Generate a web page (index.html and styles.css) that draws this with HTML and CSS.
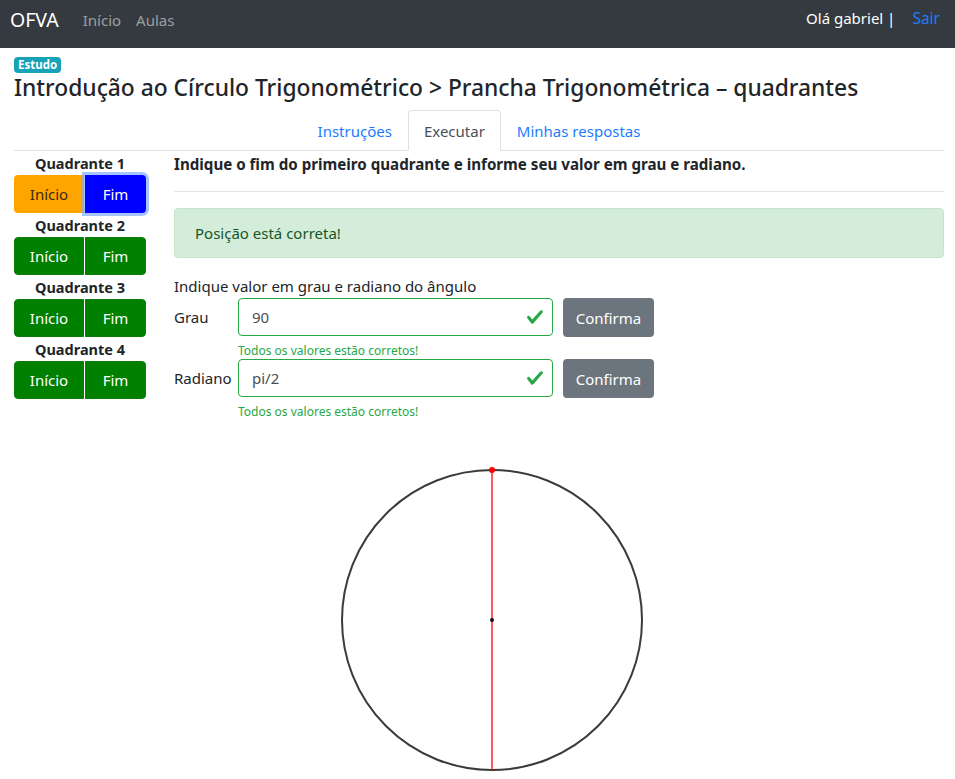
FILE: index.html
```html
<!DOCTYPE html>
<html lang="pt">
<head>
<meta charset="utf-8">
<title>OFVA</title>
<link rel="stylesheet" href="styles.css">
</head>
<body>
<nav class="navbar">
  <div class="nav-left">
    <span class="brand">OFVA</span>
    <a class="nav-link">Início</a>
    <a class="nav-link">Aulas</a>
  </div>
  <div class="nav-right">
    <span class="user">Olá gabriel |</span>
    <a class="logout">Sair</a>
  </div>
</nav>
<main class="container">
  <span class="badge">Estudo</span>
  <h4 class="title">Introdução ao Círculo Trigonométrico &gt; Prancha Trigonométrica – quadrantes</h4>
  <ul class="tabs">
    <li class="tab">Instruções</li>
    <li class="tab active">Executar</li>
    <li class="tab">Minhas respostas</li>
  </ul>
  <div class="workspace">
    <aside class="quadrants">
      <div class="quad">
        <div class="quad-title">Quadrante 1</div>
        <div class="btn-group"><button class="btn btn-orange">Início</button><button class="btn btn-blue">Fim</button></div>
      </div>
      <div class="quad">
        <div class="quad-title">Quadrante 2</div>
        <div class="btn-group"><button class="btn btn-green">Início</button><button class="btn btn-green">Fim</button></div>
      </div>
      <div class="quad">
        <div class="quad-title">Quadrante 3</div>
        <div class="btn-group"><button class="btn btn-green">Início</button><button class="btn btn-green">Fim</button></div>
      </div>
      <div class="quad">
        <div class="quad-title">Quadrante 4</div>
        <div class="btn-group"><button class="btn btn-green">Início</button><button class="btn btn-green">Fim</button></div>
      </div>
    </aside>
    <section class="content">
      <p class="question">Indique o fim do primeiro quadrante e informe seu valor em grau e radiano.</p>
      <hr class="divider">
      <div class="alert">Posição está correta!</div>
      <p class="prompt">Indique valor em grau e radiano do ângulo</p>
      <div class="field-row">
        <label class="field-label">Grau</label>
        <div class="field">
          <div class="input-valid"><span>90</span>
            <svg class="check" viewBox="0 0 8 8" width="18" height="18"><path fill="#28a745" d="M2.3 6.73L.6 4.53c-.4-1.04.46-1.4 1.1-.8l1.1 1.4 3.4-3.8c.6-.63 1.6-.27 1.2.7l-4 4.6c-.43.5-.8.4-1.1.1z"/></svg>
          </div>
          <div class="valid-msg">Todos os valores estão corretos!</div>
        </div>
        <button class="btn btn-secondary">Confirma</button>
      </div>
      <div class="field-row">
        <label class="field-label">Radiano</label>
        <div class="field">
          <div class="input-valid"><span>pi/2</span>
            <svg class="check" viewBox="0 0 8 8" width="18" height="18"><path fill="#28a745" d="M2.3 6.73L.6 4.53c-.4-1.04.46-1.4 1.1-.8l1.1 1.4 3.4-3.8c.6-.63 1.6-.27 1.2.7l-4 4.6c-.43.5-.8.4-1.1.1z"/></svg>
          </div>
          <div class="valid-msg">Todos os valores estão corretos!</div>
        </div>
        <button class="btn btn-secondary">Confirma</button>
      </div>
    </section>
  </div>
  <div class="canvas-wrap">
    <svg class="circle" width="310" height="320" viewBox="0 0 310 320">
      <circle cx="155" cy="155" r="150" fill="none" stroke="#3a3a3a" stroke-width="2"/>
      <line x1="155" y1="5" x2="155" y2="305" stroke="#ff0000" stroke-width="1.3"/>
      <circle cx="155" cy="155" r="2" fill="#111"/>
      <circle cx="155" cy="5" r="3" fill="#ff0000"/>
    </svg>
  </div>
</main>
</body>
</html>
```
FILE: styles.css
```css
* { box-sizing: border-box; }
html, body { margin: 0; padding: 0; }
body {
  font-family: "Noto Sans", "Open Sans", sans-serif;
  font-size: 15px;
  color: #212529;
  background: #fff;
  overflow: hidden;
  height: 779px;
}
.navbar {
  height: 48px;
  background: #343a40;
  display: flex;
  align-items: flex-start;
  justify-content: space-between;
  padding: 6px 15px 0 10px;
}
.nav-left, .nav-right { display: flex; align-items: center; line-height: 28px; }
.brand { color: #fff; font-size: 19.5px; margin-right: 24px; }
.nav-link { color: rgba(255,255,255,.52); font-size: 15px; margin-right: 15px; }
.nav-right { margin-top: -2px; }
.user { color: #fff; font-size: 15px; margin-right: 17px; }
.logout { color: #1e7bff; font-size: 15.5px; }
.container { padding: 5px 11px 0 14px; }
.badge {
  display: inline-block;
  background: #17a2b8;
  color: #fff;
  font-weight: 700;
  font-size: 11.5px;
  line-height: 16px;
  padding: 0 4px;
  border-radius: 4px;
}
.title {
  margin: 0 0 7px;
  font-weight: 500;
  font-size: 22.8px;
  line-height: 30px;
  color: #212529;
}
.tabs {
  list-style: none;
  margin: 0;
  padding: 0;
  display: flex;
  justify-content: center;
  border-bottom: 1px solid #dee2e6;
  height: 41px;
}
.tab {
  color: #1e7bff;
  padding: 0 15px;
  line-height: 40px;
  border: 1px solid transparent;
  border-radius: 4px 4px 0 0;
  margin-bottom: -1px;
  font-size: 15px;
}
.tab.active {
  color: #495057;
  border-color: #dee2e6 #dee2e6 #fff;
  background: #fff;
}
.workspace { display: flex; }
.quadrants { width: 132px; flex: none; margin-right: 28px; }
.quad-title {
  text-align: center;
  font-weight: 700;
  font-size: 14.5px;
  line-height: 24px;
}
.btn-group { display: flex; }
.btn {
  font-family: inherit;
  font-size: 15px;
  border: 1px solid transparent;
  border-radius: 4px;
  height: 38px;
  padding: 0 12px;
  color: #fff;
  cursor: pointer;
}
.btn-group .btn { flex: 1; }
.btn-group .btn:first-child { border-radius: 4px 0 0 4px; width: 70px; flex: none; }
.btn-group .btn:last-child { border-radius: 0 4px 4px 0; }
.btn-orange { background: #ffa500; color: #3b2c10; }
.btn-blue { background: #0000ff; box-shadow: 0 0 0 3px rgba(130,170,255,.7); position: relative; margin-left: 1px; }
.btn-green { background: #008000; border-color: #0a7a0a; }
.btn-green + .btn-green { margin-left: 1px; }
.content { flex: 1; }
.question {
  margin: 0;
  font-weight: 700;
  font-size: 15.15px;
  line-height: 26px;
}
.divider {
  border: 0;
  border-top: 1px solid #e5e5e5;
  margin: 14px 0 16px;
}
.alert {
  background: #d4edda;
  border: 1px solid #c3e6cb;
  color: #155724;
  border-radius: 4px;
  height: 50px;
  line-height: 48px;
  padding: 0 20px;
  font-size: 15px;
}
.prompt { margin: 18px 0 2px; font-size: 15px; line-height: 20px; }
.field-row { display: flex; align-items: flex-start; }
.field-label { width: 64px; flex: none; line-height: 38px; font-size: 15px; }
.field { width: 315px; flex: none; }
.input-valid {
  height: 38px;
  border: 1px solid #28a745;
  border-radius: 4px;
  display: flex;
  align-items: center;
  justify-content: space-between;
  padding: 0 8px 0 13px;
  color: #495057;
  font-size: 15px;
}
.check { display: block; }
.valid-msg { color: #28a745; font-size: 12px; line-height: 15px; margin-top: 7px; margin-bottom: 1px; }
.btn-secondary {
  background: #6c757d;
  margin-left: 10px;
  width: 91px;
  height: 39px;
  padding: 0;
}
.canvas-wrap { padding: 45px 0 0 323px; }
.circle { display: block; }
```
